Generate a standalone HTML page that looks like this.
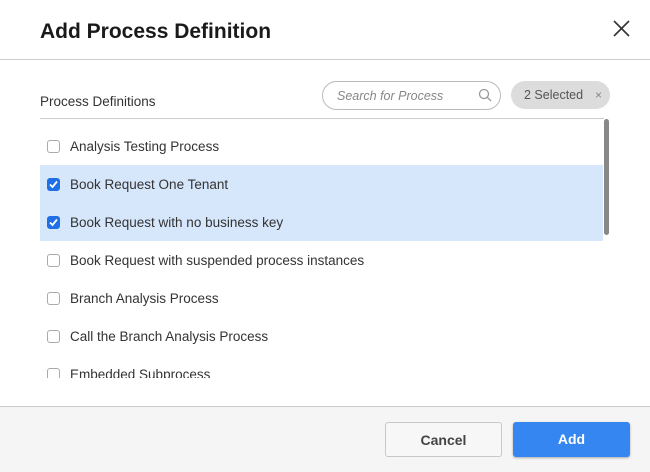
<!DOCTYPE html>
<html><head><style>
*{margin:0;padding:0;box-sizing:border-box}
body{width:650px;height:472px;background:#fff;font-family:"Liberation Sans",sans-serif;color:#222;position:relative;overflow:hidden}
.title{position:absolute;left:40px;top:20px;font-size:21px;font-weight:bold;color:#1a1a1a}
.hr1{position:absolute;left:0;top:59px;width:650px;height:1px;background:#ccc}
.lbl{position:absolute;left:40px;top:94px;font-size:13.5px;color:#333}
.search{position:absolute;left:322px;top:81px;width:179px;height:29px;border:1px solid #bbb;border-radius:15px;font-size:12.5px;font-style:italic;color:#888;padding:7px 0 0 14px}
.chip{position:absolute;left:511px;top:81px;width:99px;height:28px;border-radius:14px;background:#dcdcdc;font-size:12.5px;color:#555;padding:7px 0 0 13px}
.chip span{position:absolute;right:8px;top:7px;color:#888;font-size:12px}
.hr2{position:absolute;left:40px;top:118px;width:564px;height:1px;background:#ccc}
.list{position:absolute;left:40px;top:127px;width:563px;height:251px;overflow:hidden}
.row{height:38px;position:relative;font-size:13.5px;color:#333}
.row.sel{background:#d6e6fb}
.row .t{position:absolute;left:30px;top:12px}
.cb{position:absolute;left:7px;top:13px;width:13px;height:13px;border:1px solid #aaa;border-radius:3px;background:#fff}
.cb.on{background:#1f6fe6;border-color:#1f6fe6}
.sb{position:absolute;left:604px;top:119px;width:5px;height:116px;background:#888;border-radius:3px}
.foot{position:absolute;left:0;top:406px;width:650px;height:66px;background:#f5f5f5;border-top:1px solid #ccc}
.btn{position:absolute;top:422px;width:117px;height:35px;border-radius:3px;font-size:14px;font-weight:bold;text-align:center;line-height:35px}
.cancel{left:385px;background:#f7f7f7;border:1px solid #c8c8c8;color:#444}
.add{left:513px;background:#3686f2;color:#fff;box-shadow:0 1px 2px rgba(0,0,0,.3)}
</style></head><body>
<div class="title">Add Process Definition</div>
<svg style="position:absolute;left:613px;top:20px" width="17" height="17" viewBox="0 0 17 17"><path d="M1 1L16 16M16 1L1 16" stroke="#333" stroke-width="1.6"/></svg>
<div class="hr1"></div>
<div class="lbl">Process Definitions</div>
<div class="search">Search for Process
<svg style="position:absolute;left:155px;top:6px" width="14" height="14" viewBox="0 0 14 14"><circle cx="6" cy="6" r="4.5" fill="none" stroke="#999" stroke-width="1.3"/><path d="M9.3 9.3L13 13" stroke="#999" stroke-width="1.3"/></svg></div>
<div class="chip">2 Selected<span>×</span></div>
<div class="hr2"></div>
<div class="list">
<div class="row"><div class="cb"></div><div class="t">Analysis Testing Process</div></div>
<div class="row sel"><div class="cb on"><svg width="11" height="11" viewBox="0 0 11 11" style="position:absolute;left:0;top:0"><path d="M2 5.5L4.5 8L9 2.5" stroke="#fff" stroke-width="1.8" fill="none"/></svg></div><div class="t">Book Request One Tenant</div></div>
<div class="row sel"><div class="cb on"><svg width="11" height="11" viewBox="0 0 11 11" style="position:absolute;left:0;top:0"><path d="M2 5.5L4.5 8L9 2.5" stroke="#fff" stroke-width="1.8" fill="none"/></svg></div><div class="t">Book Request with no business key</div></div>
<div class="row"><div class="cb"></div><div class="t">Book Request with suspended process instances</div></div>
<div class="row"><div class="cb"></div><div class="t">Branch Analysis Process</div></div>
<div class="row"><div class="cb"></div><div class="t">Call the Branch Analysis Process</div></div>
<div class="row"><div class="cb"></div><div class="t">Embedded Subprocess</div></div>
</div>
<div class="sb"></div>
<div class="foot"></div>
<div class="btn cancel">Cancel</div>
<div class="btn add">Add</div>
</body></html>
